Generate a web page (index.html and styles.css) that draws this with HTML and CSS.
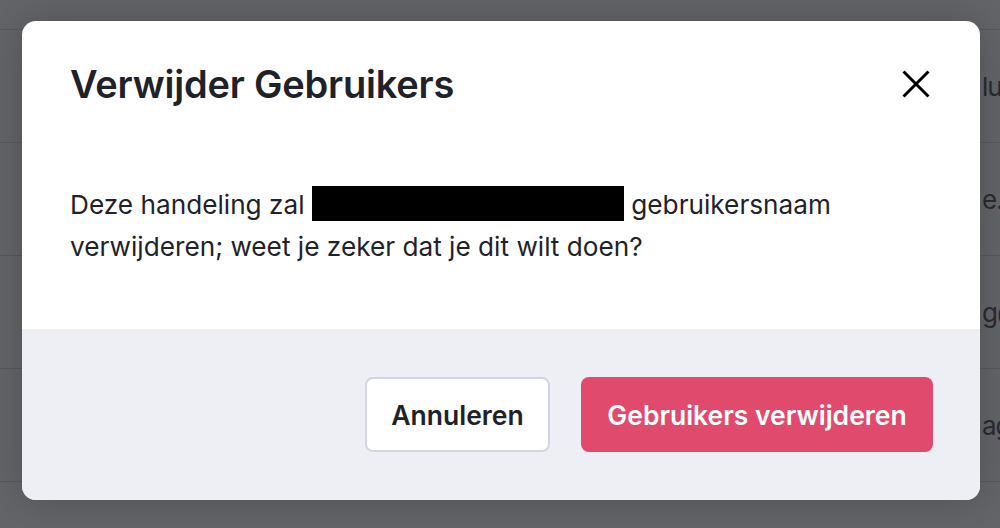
FILE: index.html
```html
<!DOCTYPE html>
<html lang="nl">
<head>
<meta charset="utf-8">
<title>Verwijder Gebruikers</title>
<link rel="stylesheet" href="styles.css">
</head>
<body>
<div class="page">
  <div class="row row-head"></div>
  <div class="row"><span class="cell">lu</span></div>
  <div class="row"><span class="cell">e.</span></div>
  <div class="row"><span class="cell">g@</span></div>
  <div class="row"><span class="cell">ag</span></div>
</div>
<div class="backdrop">
  <div class="modal" role="dialog" aria-labelledby="modal-title">
    <div class="modal-header">
      <h2 class="modal-title" id="modal-title">Verwijder Gebruikers</h2>
      <button class="close-btn" aria-label="Sluiten">
        <svg viewBox="0 0 28 28" width="28" height="28"><path d="M1.5 1.5 L26.5 26.5 M26.5 1.5 L1.5 26.5" stroke="#000" stroke-width="3" fill="none"/></svg>
      </button>
    </div>
    <div class="modal-body">
      <p class="message">Deze handeling zal <span class="redacted" aria-label="verborgen"></span> gebruikersnaam verwijderen; weet je zeker dat je dit wilt doen?</p>
    </div>
    <div class="modal-footer">
      <button class="btn btn-cancel">Annuleren</button>
      <button class="btn btn-danger">Gebruikers verwijderen</button>
    </div>
  </div>
</div>
</body>
</html>
```

FILE: styles.css
```css
html, body {
  margin: 0;
  padding: 0;
}
body {
  width: 1000px;
  height: 528px;
  overflow: hidden;
  background: #646569;
  font-family: "Inter", "Noto Sans", sans-serif;
  position: relative;
}
.page {
  display: flex;
  flex-direction: column;
}
.row {
  height: 112px;
  border-bottom: 1px solid #58595e;
  display: flex;
  align-items: center;
  padding-left: 982px;
  overflow: hidden;
}
.row-head {
  height: 29px;
}
.cell {
  font-size: 26px;
  color: #2a2b30;
  white-space: nowrap;
  letter-spacing: -1px;
}
.backdrop {
  position: absolute;
  inset: 0;
  padding: 21px 20px 28px 22px;
  box-sizing: border-box;
}
.modal {
  width: 958px;
  height: 479px;
  background: #fff;
  border-radius: 14px;
  overflow: hidden;
  display: flex;
  flex-direction: column;
  box-shadow: 0 0 40px rgba(0, 0, 0, 0.22);
}
.modal-header {
  display: flex;
  align-items: center;
  justify-content: space-between;
  padding: 43px 50px 0 48px;
}
.modal-title {
  margin: 0;
  font-size: 38px;
  line-height: 40px;
  font-weight: 600;
  color: #1f2229;
  letter-spacing: -0.2px;
}
.close-btn {
  border: 0;
  background: none;
  padding: 0;
  width: 28px;
  height: 28px;
  display: flex;
}
.modal-body {
  padding: 80px 48px 0 48px;
  flex: 1;
}
.message {
  margin: 0;
  font-size: 26.2px;
  line-height: 42px;
  color: #1f2229;
}
.redacted {
  display: inline-block;
  background: #000;
  width: 312px;
  height: 35px;
  vertical-align: -7px;
}
.modal-footer {
  background: #eeeff4;
  height: 171px;
  box-sizing: border-box;
  display: flex;
  justify-content: flex-end;
  align-items: center;
  gap: 31px;
  padding: 0 47px 0 48px;
}
.btn {
  height: 75px;
  font-family: inherit;
  font-size: 26.5px;
  font-weight: 600;
  border-radius: 8px;
  box-sizing: border-box;
  cursor: pointer;
}
.btn-cancel {
  width: 185px;
  background: #fff;
  color: #1f2229;
  border: 2px solid #d3d6e2;
}
.btn-danger {
  width: 352px;
  background: #e04b6d;
  color: #fff;
  border: 0;
}
```
